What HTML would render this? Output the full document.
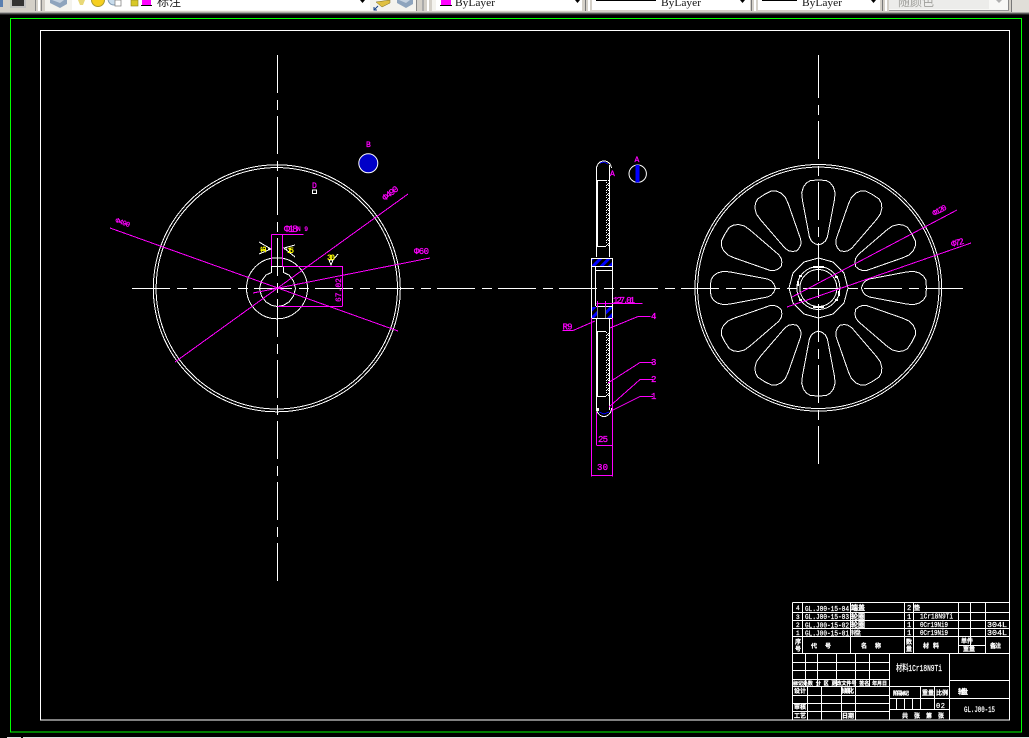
<!DOCTYPE html>
<html><head><meta charset="utf-8"><style>
html,body{margin:0;padding:0;background:#000;width:1029px;height:738px;overflow:hidden}
svg{display:block}
text{font-family:"Liberation Mono","Noto Sans CJK SC",monospace}
.ui{font-family:"Liberation Sans","Noto Sans CJK SC",sans-serif}
</style></head><body>
<svg xmlns="http://www.w3.org/2000/svg" width="1029" height="738" viewBox="0 0 1029 738">
<defs>
<polygon id="lobe" points="-8,-107.5 0,-108 8,-107.5 12,-105 15,-101 16.7,-95 16,-88 9,-51 7,-47 4,-44.5 0,-43 -4,-44.5 -7,-47 -9,-51 -16,-88 -16.7,-95 -15,-101 -12,-105"/>
<pattern id="hatch" width="6" height="6" patternUnits="userSpaceOnUse" patternTransform="rotate(-45)"><rect width="6" height="6" fill="#000"/><rect width="6" height="3" fill="#0000ff"/></pattern>
<pattern id="mesh" width="4" height="5" patternUnits="userSpaceOnUse"><rect width="4" height="5" fill="#000"/><rect x="0" y="0" width="1" height="1" fill="#fff"/><rect x="2" y="0" width="1" height="1" fill="#fff"/><rect x="1" y="2" width="2" height="1" fill="#fff"/><rect x="0" y="3" width="1" height="1" fill="#fff"/><rect x="3" y="4" width="1" height="1" fill="#fff"/></pattern>
</defs>

<!-- toolbar -->
<rect x="0" y="0" width="1029" height="12" fill="#d4d0c8"/>
<rect x="0" y="12" width="1029" height="1" fill="#a8a8a4"/>
<rect x="0" y="13" width="1029" height="1" fill="#5a5a5a"/>
<rect x="0" y="14" width="1029" height="1" fill="#222"/>
<rect x="0" y="0" width="3" height="7" fill="#5a7fb0"/>
<rect x="10" y="0" width="16" height="8" fill="#c0c0c0"/>
<rect x="12" y="0" width="12" height="6" fill="#333"/>
<g shape-rendering="crispEdges">
<rect x="35" y="0" width="1" height="11" fill="#888"/><rect x="38" y="0" width="2" height="11" fill="#fff"/><rect x="41" y="0" width="1" height="11" fill="#888"/>
<rect x="45" y="0" width="371" height="11" fill="#f4f3ee"/>
<rect x="72" y="0" width="298" height="10" fill="#fff"/>
<rect x="416" y="0" width="1" height="11" fill="#888"/><rect x="422" y="0" width="2" height="11" fill="#aaa"/><rect x="427" y="0" width="2" height="11" fill="#fff"/>
<rect x="432" y="0" width="150" height="11" fill="#f4f3ee"/><rect x="436" y="0" width="146" height="10" fill="#fff"/>
<rect x="585" y="0" width="1" height="11" fill="#777"/><rect x="588" y="0" width="2" height="11" fill="#fff"/>
<rect x="592" y="0" width="158" height="10" fill="#fff"/>
<rect x="751" y="0" width="1" height="11" fill="#777"/><rect x="754" y="0" width="2" height="11" fill="#fff"/>
<rect x="758" y="0" width="122" height="10" fill="#fff"/>
<rect x="882" y="0" width="1" height="11" fill="#777"/><rect x="885" y="0" width="2" height="11" fill="#fff"/>
<rect x="889" y="0" width="119" height="10" fill="#f8f8f6"/><rect x="889" y="0" width="100" height="9" fill="#ececea"/>
<rect x="1008" y="0" width="1" height="11" fill="#888"/><rect x="889" y="10" width="120" height="1" fill="#999"/>
<rect x="1011" y="0" width="1" height="12" fill="#777"/><rect x="1012" y="0" width="17" height="12" fill="#e0ded8"/>
<rect x="596" y="0" width="60" height="1" fill="#000"/><rect x="762" y="0" width="35" height="1" fill="#000"/>
<rect x="142" y="0" width="9" height="5" fill="#ff00ff"/><rect x="141" y="5" width="11" height="1" fill="#000"/>
<rect x="441" y="0" width="10" height="5" fill="#ff00ff"/><rect x="440" y="5" width="12" height="1" fill="#000"/>
</g>
<!-- layer icons -->
<polygon points="50,0 67,0 67,4 60,8 50,3" fill="#8ea4bd"/><polygon points="52,0 64,0 60,3" fill="#c5d2e0"/>
<polygon points="78,0 85,0 83,5 80,5" fill="#e8d878"/>
<circle cx="98" cy="0" r="6.5" fill="#f6cf20" stroke="#a89a30"/>
<circle cx="114" cy="-1" r="6" fill="#c8dcec" stroke="#7f9ab4"/><rect x="115" y="0" width="6" height="6" fill="#fff" stroke="#777" stroke-width=".7"/>
<rect x="131" y="0" width="7" height="6" fill="#d8c828" stroke="#8a8020" stroke-width=".6"/>
<text class="ui" x="157" y="6" font-size="12" fill="#222" style='font-family:"Noto Sans CJK SC",sans-serif'>标注</text>
<polygon points="360,0 365,0 362.5,3" fill="#000"/>
<polygon points="376,2 390,0 390,3 382,7" fill="#e0c040" stroke="#7a6a20" stroke-width=".5"/><path d="M374 10l4-4M374 7v3h3" stroke="#14408a" stroke-width="1" fill="none"/>
<polygon points="397,0 413,0 413,4 406,8 397,3" fill="#8ea4bd"/><polygon points="399,0 410,0 406,3" fill="#c5d2e0"/>
<text class="ui" x="455" y="6" font-size="11" fill="#111" style='font-family:"Liberation Serif",serif' textLength="40" lengthAdjust="spacingAndGlyphs">ByLayer</text>
<polygon points="575,0 580,0 577.5,3" fill="#000"/>
<text x="661" y="6" font-size="11" fill="#111" style='font-family:"Liberation Serif",serif' textLength="40" lengthAdjust="spacingAndGlyphs">ByLayer</text>
<polygon points="740,0 745,0 742.5,3" fill="#000"/>
<text x="802" y="6" font-size="11" fill="#111" style='font-family:"Liberation Serif",serif' textLength="40" lengthAdjust="spacingAndGlyphs">ByLayer</text>
<polygon points="871,0 876,0 873.5,3" fill="#000"/>
<text x="898" y="6" font-size="12" fill="#a0a09c" style='font-family:"Noto Sans CJK SC",sans-serif'>随颜色</text>
<polygon points="996,0 1002,0 999,3" fill="#b0b0b0"/>

<!-- frames -->
<g shape-rendering="crispEdges" fill="none" stroke-width="1">
<rect x="10.5" y="18.5" width="1011" height="713.5" stroke="#00ff00"/>
<rect x="40.5" y="30.5" width="969" height="689.5" stroke="#fff"/>
<rect x="7" y="737" width="14" height="1" fill="#ddd" stroke="none"/>
<rect x="23" y="737" width="1006" height="1" fill="#ddd" stroke="none"/>

<!-- center lines -->
<g stroke="#fff">
<line x1="132" y1="288.5" x2="963" y2="288.5" stroke-dasharray="38 7 10 6"/>
<line x1="277.5" y1="55" x2="277.5" y2="581" stroke-dasharray="38 7 10 6"/>
<line x1="818.5" y1="55" x2="818.5" y2="60" />
<line x1="818.5" y1="60" x2="818.5" y2="470" stroke-dasharray="38 7 10 6"/>
</g>

<!-- left wheel -->
<g stroke="#fff">
<circle cx="276.8" cy="288.3" r="123.5"/>
<circle cx="276.8" cy="288.3" r="120.7"/>
<circle cx="277" cy="288.3" r="30.5"/>
<path d="M271.5 266.5V272.5L266 275L261.5 281L259.5 288.5L261.5 296L266 302L272 305.5L277.5 306.5L283 305.5L289 302L293.5 296L295.5 288.5L293.5 281L289 275L283.5 272.5V266.5Z"/>
</g>
<!-- right wheel -->
<g stroke="#fff">
<circle cx="818.3" cy="287.8" r="123.3"/>
<circle cx="818.3" cy="287.8" r="120.7"/>
<polygon points="818.5,258 833,262 844,273 848,288 844,303 833,314 818.5,318 804,314 793,303 789,288 793,273 804,262"/>
<circle cx="818.4" cy="288" r="21.5"/>
<circle cx="818.4" cy="288" r="18.5"/>
<g transform="translate(818.4 288)">
<use href="#lobe"/><use href="#lobe" transform="rotate(30)"/><use href="#lobe" transform="rotate(60)"/><use href="#lobe" transform="rotate(90)"/><use href="#lobe" transform="rotate(120)"/><use href="#lobe" transform="rotate(150)"/><use href="#lobe" transform="rotate(180)"/><use href="#lobe" transform="rotate(210)"/><use href="#lobe" transform="rotate(240)"/><use href="#lobe" transform="rotate(270)"/><use href="#lobe" transform="rotate(300)"/><use href="#lobe" transform="rotate(330)"/>
</g>
</g>
<g fill="#fff">
<rect x="813" y="266" width="11" height="2"/><rect x="813" y="306" width="11" height="2"/>
<rect x="797" y="281" width="2" height="5"/><rect x="838" y="291" width="2" height="5"/>
<rect x="799" y="275" width="3" height="2"/><rect x="835" y="276" width="3" height="2"/><rect x="799" y="299" width="3" height="2"/><rect x="835" y="299" width="3" height="2"/>
</g>

<!-- side view -->
<g stroke="#fff">
<path d="M596.5 257V170A7.5 8 0 0 1 611.5 168"/>
<path d="M609.5 165V257"/>
<rect x="597.5" y="180.5" width="11" height="66"/>
<rect x="591.5" y="258.5" width="21" height="60"/>
<path d="M592 266.5H612M596 270.5H612M595.5 267V306M596 306.5H612M597 307V318M606 307V318"/>
<path d="M596.5 319V408A7.5 8.5 0 0 0 611.5 408M609.5 319V410"/>
<rect x="597.5" y="331.5" width="11" height="65"/>
</g>
<rect x="592" y="259" width="20" height="7" fill="url(#hatch)"/>
<rect x="592" y="307" width="5" height="11" fill="url(#hatch)"/>
<rect x="606" y="307" width="6" height="11" fill="url(#hatch)"/>
<rect x="606" y="180" width="3" height="67" fill="url(#mesh)"/>
<rect x="606" y="331" width="3" height="66" fill="url(#mesh)"/>
<path d="M600 163L604 162L608 164" stroke="#0000ff"/>
<path d="M599 412L604 414L609 412" stroke="#0000ff"/>
<rect x="596" y="408" width="3" height="3" fill="#fff"/>

<!-- magenta dims -->
<g stroke="#ff00ff">
<line x1="408" y1="194" x2="175" y2="362"/>
<line x1="110" y1="228" x2="398" y2="331"/>
<line x1="430" y1="258" x2="253" y2="293"/>
<path d="M271.5 234.5H303.5M271.5 234.5V266M282.5 234.5V266M282.5 266.5H342.5M277.5 306.5H342.5M342.5 266V306"/>
<line x1="957" y1="210" x2="792" y2="297"/>
<line x1="971" y1="243" x2="787" y2="307"/>
<path d="M591.5 318V476.5M612.5 318V476.5M591.5 475.5H612.5M596.5 412V445M596.5 445.5H612"/>
<path d="M596.5 303.5H642.5M597.5 301V307M605.5 301V307"/>
<path d="M650.5 316.5H638L610 328M653 362.5H640L608 383M653 379.5H640L609 407M653 396.5H640L611 411M562.5 330.5H573L595 321"/>
</g>
</g>

<!-- detail circles -->
<circle cx="368.3" cy="163.3" r="9.5" fill="#0000c8" stroke="#fff" stroke-width="1"/>
<circle cx="637.7" cy="173.7" r="8.7" fill="none" stroke="#fff" stroke-width="1"/>
<rect x="635.5" y="165" width="4" height="17.5" fill="#0000ff"/>
<rect x="312.5" y="190" width="4" height="3.5" fill="none" stroke="#fff" stroke-width="1" shape-rendering="crispEdges"/>
<!-- weld ticks -->
<g stroke="#fff" fill="none" shape-rendering="crispEdges">
<path d="M259 242L271 249L259 254M271 249H268"/>
<path d="M295 257L284 248L295 245M284 249H287"/>
<path d="M329 260L331 265L333 260ZM333 260L338 254"/>
</g>

<!-- magenta text -->
<g fill="#ff00ff" font-size="9" stroke="#ff00ff" stroke-width=".3">
<text transform="translate(385 201) rotate(-38)" textLength="18">Φ490</text>
<text transform="translate(115 222) rotate(20)" font-size="7" textLength="15">Φ490</text>
<text x="414" y="254" textLength="15">Φ60</text>
<text x="284" y="232" font-size="10" textLength="14">Φ18</text>
<text x="297" y="231" font-size="6" textLength="11">N9</text>
<text transform="translate(341 302) rotate(-90)" font-size="8" textLength="24">67.02</text>
<text x="366" y="147" font-size="8">B</text>
<text x="312" y="188" font-size="8">D</text>
<text x="634.5" y="162" font-size="8">A</text>
<text x="610" y="176" font-size="8">A</text>
<text x="613" y="303" font-size="9" textLength="22">127.01</text>
<text x="562.5" y="329.5" font-size="9" textLength="10">R9</text>
<text x="598" y="442" textLength="10">25</text>
<text x="597" y="470" font-size="9" textLength="11">30</text>
<text x="651" y="319" textLength="5">4</text>
<text x="651" y="365" textLength="5">3</text>
<text x="651" y="382" textLength="5">2</text>
<text x="651" y="399" textLength="5">1</text>
<text transform="translate(934 216) rotate(-28)" font-size="8" textLength="15">Φ120</text>
<text transform="translate(952 247) rotate(-15)" textLength="13">Φ72</text>
</g>
<g fill="#ffff00" font-size="8" font-weight="bold">
<text transform="translate(266 253) rotate(-90)" textLength="7">16</text>
<text x="287" y="253" textLength="7">15</text>
<text x="327" y="260" textLength="8">30</text>
</g>

<!-- title block -->
<g stroke="#fff" fill="none" shape-rendering="crispEdges">
<path d="M792.5 602.5H1009.5M792.5 612.5H1009.5M792.5 620.5H1009.5M792.5 628.5H1009.5M792.5 636.5H1009.5M792.5 653.5H1009.5M792.5 602.5V720"/>
<path d="M802.5 602V653M850.5 602V653M904.5 602V653M913.5 602V653M958.5 602V653M985.5 602V653M970.5 602V645M958.5 645.5H985.5M970.5 636V645"/>
<path d="M792.5 662.5H889M792.5 670.5H889M792.5 679.5H889M792.5 686.5H889M792.5 695.5H889M792.5 703.5H889M792.5 711.5H889"/>
<path d="M805.5 653V687M817.5 653V687M836.5 653V687M855.5 653V687M869.5 653V687M807.5 687V720M821.5 687V720M841.5 687V720M855.5 687V720"/>
<path d="M889.5 653V720M949.5 653V720M949.5 680.5H1009.5M949.5 698.5H1009.5M889.5 686.5H949.5M889.5 698.5H949.5M889.5 709.5H949.5"/>
<path d="M920.5 687V709M934.5 687V709M896.5 698V709M904.5 698V709M912.5 698V709"/>
</g>
<g fill="#fff" font-size="7" stroke="#fff" stroke-width=".25">
<text x="796" y="610" font-size="6">4</text><text x="796" y="619" font-size="6">3</text><text x="796" y="627" font-size="6">2</text><text x="796" y="635" font-size="6">1</text>
<text x="805" y="611" textLength="44" lengthAdjust="spacingAndGlyphs">GL.J00-15-04</text>
<text x="805" y="619" textLength="44" lengthAdjust="spacingAndGlyphs">GL.J00-15-03</text>
<text x="805" y="627.5" textLength="44" lengthAdjust="spacingAndGlyphs">GL.J00-15-02</text>
<text x="805" y="635.5" textLength="44" lengthAdjust="spacingAndGlyphs">GL.J00-15-01</text>
<text x="851" y="610" font-size="7" font-weight="bold">端盖</text>
<text x="851" y="619" font-size="7" font-weight="bold">轮圈</text>
<text x="851" y="627" font-size="7" font-weight="bold">轮圈</text>
<text x="851" y="635" font-size="6" textLength="10">轮 盘</text>
<text x="907" y="610">2</text><text x="907" y="619">1</text><text x="907" y="627">1</text><text x="907" y="635">1</text>
<text x="914" y="610" font-size="6" font-weight="bold">垫</text>
<text x="920" y="618.5" textLength="33" lengthAdjust="spacingAndGlyphs">1Cr18N9Ti</text>
<text x="920" y="627" textLength="28" lengthAdjust="spacingAndGlyphs">0Cr19Ni9</text>
<text x="920" y="635" textLength="28" lengthAdjust="spacingAndGlyphs">0Cr19Ni9</text>
<text x="987" y="627" textLength="20" lengthAdjust="spacingAndGlyphs">304L</text>
<text x="987" y="635" textLength="20" lengthAdjust="spacingAndGlyphs">304L</text>
<g font-size="6" font-weight="bold">
<text x="795" y="644">序</text><text x="795" y="651">号</text>
<text x="811" y="648">代</text><text x="825" y="648">号</text>
<text x="861" y="648">名</text><text x="875" y="648">称</text>
<text x="906" y="644">数</text><text x="906" y="651">量</text>
<text x="923" y="648">材</text><text x="933" y="648">料</text>
<text x="961" y="643">单件</text><text x="963" y="651">重量</text>
<text x="990" y="648" textLength="11">备注</text>
<text x="793" y="685" font-size="5" textLength="94">标记处数 分 区 更改文件号 签名 年月日</text>
<text x="794" y="693">设计</text><text x="841" y="693" textLength="13">标准化</text>
<text x="794" y="709">审核</text><text x="794" y="718">工艺</text><text x="842" y="718">日期</text>
<text x="893" y="695" font-size="5" textLength="16">阶段标记</text>
<text x="922" y="695">重量</text><text x="936" y="695">比例</text>
<text x="902" y="718" textLength="42">共 张 第 张</text>
<text x="958" y="694" font-size="7" textLength="10">轮盘</text>
</g>
<text x="896" y="671" font-size="9" textLength="46" lengthAdjust="spacingAndGlyphs">材料1Cr18N9Ti</text>
<text x="936" y="708" font-size="7" textLength="9">02</text>
<text x="964" y="712" font-size="8" textLength="31" lengthAdjust="spacingAndGlyphs">GL.J00-15</text>
</g>
</svg>
</body></html>
